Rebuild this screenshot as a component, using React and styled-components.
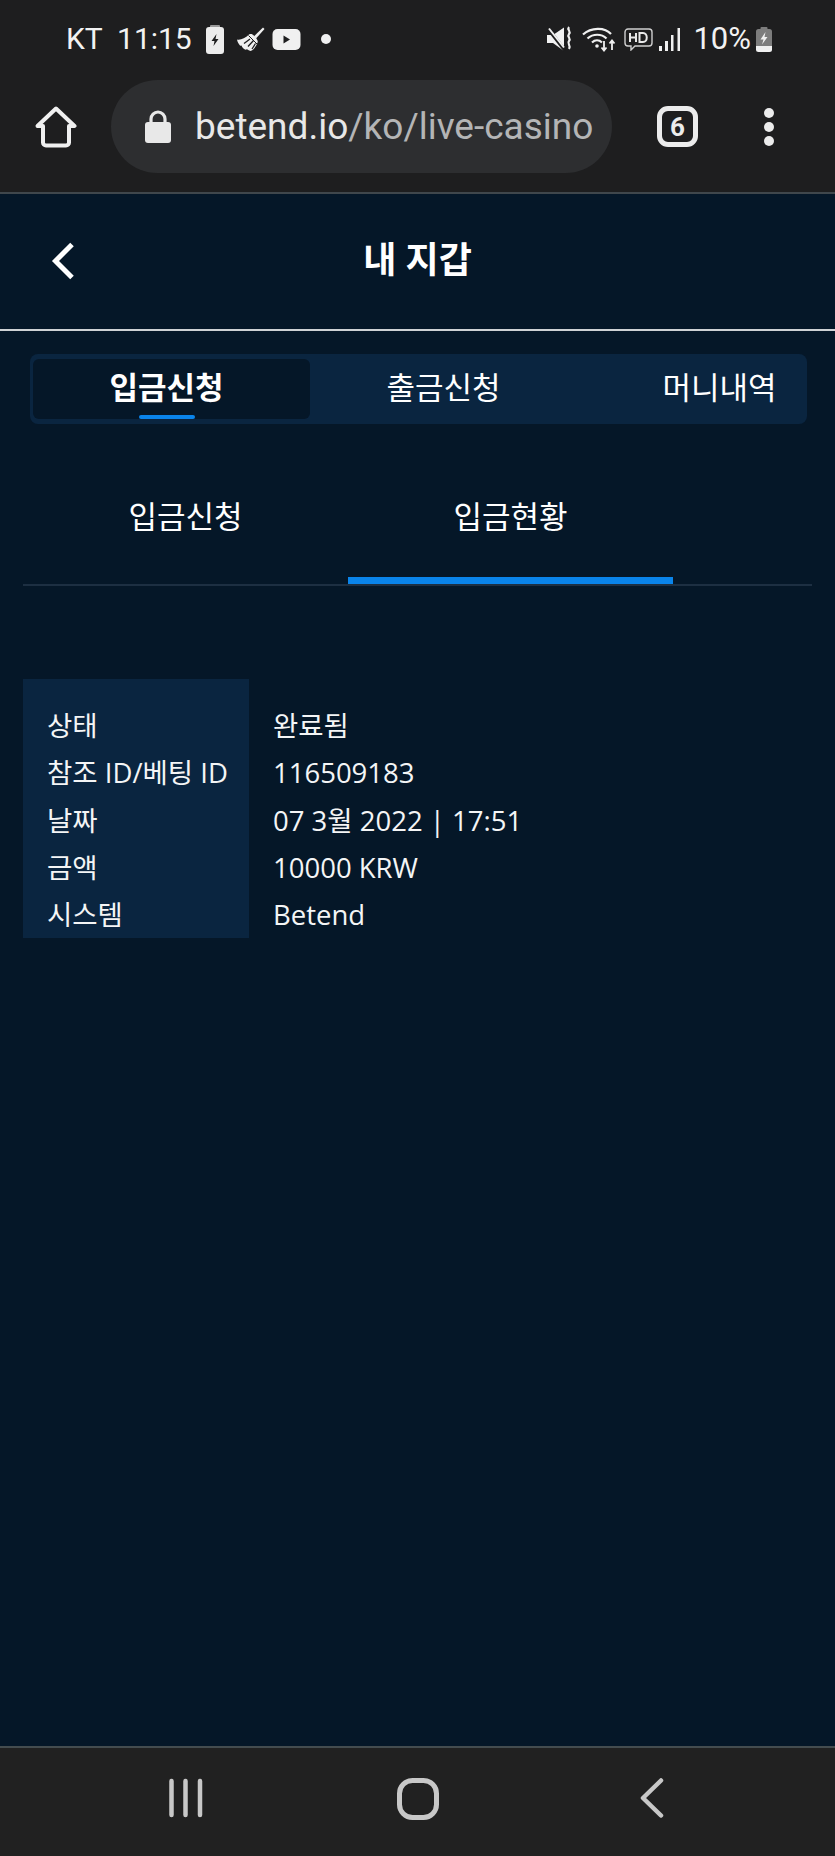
import React from "react";
import styled, { createGlobalStyle } from "styled-components";

const GlobalStyle = createGlobalStyle`
  html, body {
    margin: 0;
    padding: 0;
    background: #051728;
  }
  * {
    box-sizing: border-box;
  }
`;

const Page = styled.div`
  width: 835px;
  height: 1856px;
  display: flex;
  flex-direction: column;
  background: #051728;
  color: #fff;
  font-family: "Open Sans", "Noto Sans CJK KR", sans-serif;
  overflow: hidden;
`;

/* android status bar */
const StatusBar = styled.div`
  height: 80px;
  flex: none;
  display: flex;
  align-items: center;
  justify-content: space-between;
  padding: 0 63px 2px 66px;
  background: #1e1e1f;
  font-family: Roboto, "Liberation Sans", sans-serif;
`;

const StatusGroup = styled.div`
  display: flex;
  align-items: center;
`;

const StatusText = styled.span`
  font-size: ${(p) => p.$size || 31}px;
  line-height: 40px;
  color: #f2f2f2;
  white-space: pre;
  margin-right: ${(p) => p.$mr || 0}px;
`;

const StatusIcon = styled.svg`
  display: block;
  flex: none;
  margin-right: ${(p) => p.$mr || 0}px;
`;

/* chrome toolbar */
const BrowserBar = styled.div`
  height: 114px;
  flex: none;
  display: flex;
  align-items: flex-start;
  padding: 0 0 0 35px;
  background: #1e1e1f;
  border-bottom: 2px solid #40474c;
`;

const ToolbarIcon = styled.svg`
  display: block;
  flex: none;
  margin-top: 26px;
  margin-left: ${(p) => p.$ml || 0}px;
`;

const UrlPill = styled.div`
  width: 501px;
  height: 93px;
  margin-left: 34px;
  display: flex;
  align-items: center;
  padding-left: 34px;
  background: #2d2e30;
  border-radius: 47px;
`;

const UrlText = styled.div`
  margin-left: 24px;
  font-family: Roboto, "Liberation Sans", sans-serif;
  font-size: 37px;
  white-space: nowrap;
  color: #b4b5b6;

  b {
    font-weight: 400;
    color: #e8e8e8;
  }
`;

const TabCounter = styled.div`
  width: 41px;
  height: 41px;
  margin: 26px 0 0 45px;
  display: flex;
  align-items: center;
  justify-content: center;
  border: 5px solid #ececec;
  border-radius: 11px;
  color: #ececec;
  font-family: Roboto, "Liberation Sans", sans-serif;
  font-size: 26px;
  font-weight: 700;
`;

const DotsMenu = styled.div`
  display: flex;
  flex-direction: column;
  gap: 4px;
  margin: 28px 0 0 66px;

  span {
    width: 10px;
    height: 10px;
    border-radius: 50%;
    background: #ececec;
  }
`;

/* wallet page */
const Main = styled.div`
  flex: 1;
  display: flex;
  flex-direction: column;
`;

const Header = styled.div`
  height: 137px;
  flex: none;
  display: flex;
  align-items: center;
  justify-content: center;
  padding-bottom: 3px;
  position: relative;
  border-bottom: 2px solid #cfd2d5;
`;

const BackLink = styled.svg`
  position: absolute;
  left: 51px;
  top: 48px;
`;

const Title = styled.h1`
  margin: 0;
  font-size: 36px;
  line-height: 44px;
  font-weight: 700;
`;

const WalletTabs = styled.div`
  margin: 23px 28px 0 30px;
  height: 70px;
  flex: none;
  display: grid;
  grid-template-columns: 277px 277px 275px;
  padding: 5px 3px;
  background: #0a2540;
  border-radius: 8px;
  overflow: hidden;
`;

const WalletTab = styled.div`
  position: relative;
  display: flex;
  align-items: center;
  justify-content: center;
  padding: 0 10px 7px 0;
  font-size: 31px;
  font-weight: ${(p) => (p.$active ? 700 : 400)};
  background: ${(p) => (p.$active ? "#051728" : "transparent")};
  border-radius: 6px;

  ${(p) =>
    p.$active &&
    `
    &::after {
      content: "";
      position: absolute;
      left: 106px;
      bottom: 0;
      width: 56px;
      height: 4px;
      border-radius: 2px;
      background: #0a84ea;
    }
  `}
`;

const SubTabs = styled.div`
  margin: 56px 23px 0;
  flex: none;
  display: flex;
  border-bottom: 2px solid #1d2f42;
`;

const SubTab = styled.div`
  width: 325px;
  height: 104px;
  display: flex;
  align-items: center;
  justify-content: center;
  padding-bottom: 28px;
  font-size: 31px;
  border-bottom: 7px solid ${(p) => (p.$active ? "#0a84ea" : "transparent")};
`;

const Table = styled.div`
  margin: 93px 23px 0;
  display: flex;
  font-size: 27.5px;
  line-height: 47.3px;
  color: #f4f5f6;
`;

const LabelCol = styled.div`
  width: 226px;
  height: 259px;
  padding: 23px 0 0 24px;
  background: #0a2540;
`;

const ValueCol = styled.div`
  padding: 23px 0 0 24px;
`;

const Row = styled.div`
  white-space: pre;
`;

/* android nav bar */
const NavBar = styled.div`
  height: 110px;
  flex: none;
  display: flex;
  align-items: flex-start;
  background: #212121;
  border-top: 2px solid #444c4f;
  padding: 30px 0 0 166px;
`;

const NavIcon = styled.svg`
  display: block;
  flex: none;
  margin-left: ${(p) => p.$ml || 0}px;
`;

const labels = ["상태", "참조 ID/베팅 ID", "날짜", "금액", "시스템"];
const values = ["완료됨", "116509183", "07 3월 2022 | 17:51", "10000 KRW", "Betend"];

export default function App() {
  return (
    <Page>
      <GlobalStyle />
      <StatusBar>
        <StatusGroup>
          <StatusText $size={30} $mr={13}>KT  11:15</StatusText>
          <StatusIcon width="20" height="29" viewBox="0 0 20 29" $mr={12}>
            <rect x="5" y="0" width="10" height="3" rx="1" fill="#9a9a9a" />
            <rect x="1" y="2" width="18" height="27" rx="3" fill="#ececec" />
            <path d="M11.500 9 6.500 16h3l-1 5 5-7h-3z" fill="#1e1e1f" />
          </StatusIcon>
          <StatusIcon width="28" height="26" viewBox="0 0 28 26" $mr={7}>
            <path d="M26 1.500 27.500 3 19 12.500 16.800 10.500z" fill="#f0f0f0" />
            <path
              d="M12 8.500c2-.8 3.500-.3 5 1.200s2.800 3 3.500 4.800c.4 1 .2 2-.3 2.800C19 20.500 17 23.500 13.500 25c-1.200-.3-2.500-1-3.500-1.800l-1.500.6C6.500 22.800 5 21.200 4.500 19.500l-1.300.2C1.500 18 .4 15.800 0 13.500c3.500.9 8-1.300 12-5z"
              fill="#f0f0f0"
            />
            <path
              d="M16.500 14.500 11 20.500M13 13 7 17.500M18.500 17.500 15 23"
              fill="none"
              stroke="#1e1e1f"
              strokeWidth="1.300"
            />
            <path d="M11.500 9.500 20 18" fill="none" stroke="#1e1e1f" strokeWidth="1" />
          </StatusIcon>
          <StatusIcon width="29" height="21" viewBox="0 0 29 21" $mr={20}>
            <rect x="0.500" y="0" width="28" height="21" rx="5" fill="#f0f0f0" />
            <path d="M11.500 6.500v8l6.500-4z" fill="#1e1e1f" />
          </StatusIcon>
          <StatusIcon width="10" height="10" viewBox="0 0 10 10">
            <circle cx="5" cy="5" r="5" fill="#f0f0f0" />
          </StatusIcon>
        </StatusGroup>
        <StatusGroup>
          <StatusIcon width="26" height="26" viewBox="0 0 26 26" $mr={9}>
            <path d="M0 9h6l11-7.500V25L6 17H0z" fill="#f2f2f2" />
            <path d="M0.500 2 18 24.500" stroke="#1e1e1f" strokeWidth="3.500" />
            <path d="M2 2.500 17 21.500" stroke="#f2f2f2" strokeWidth="2" />
            <path
              d="M22 1c-2.500 3 2.500 4 0 7s2.500 4 0 7 2.500 4 0 8"
              fill="none"
              stroke="#f2f2f2"
              strokeWidth="2.200"
            />
          </StatusIcon>
          <StatusIcon width="34" height="26" viewBox="0 0 34 26" $mr={8}>
            <path
              d="M1 8.500C9 1 23 1 29 8M5.500 12.500c5.500-5 14-5 19 0M10 16.500c3-2.800 7-2.800 10 0"
              fill="none"
              stroke="#f0f0f0"
              strokeWidth="2.200"
            />
            <circle cx="15" cy="20" r="1.800" fill="#f0f0f0" />
            <path
              d="M22 15v9M19.500 21.500 22 24.500l2.500-3M30 24v-9M27.500 17.500 30 14.500l2.500 3"
              fill="none"
              stroke="#f0f0f0"
              strokeWidth="1.800"
            />
          </StatusIcon>
          <StatusIcon width="29" height="23" viewBox="0 0 29 23" $mr={6}>
            <path
              d="M4 1h21a3 3 0 0 1 3 3v11a3 3 0 0 1-3 3H11l-4 4v-4H4a3 3 0 0 1-3-3V4a3 3 0 0 1 3-3z"
              fill="none"
              stroke="#cfcfcf"
              strokeWidth="1.400"
            />
            <path
              d="M6 5v9M12 5v9M6 9.500h6M15.500 5v9h3.500c5 0 5-9 0-9z"
              fill="none"
              stroke="#e8e8e8"
              strokeWidth="2"
            />
          </StatusIcon>
          <StatusIcon width="22" height="24" viewBox="0 0 22 24" $mr={12}>
            <rect x="0" y="19" width="3" height="5" fill="#f0f0f0" />
            <rect x="6" y="14" width="3" height="10" fill="#f0f0f0" />
            <rect x="12" y="8" width="2.500" height="16" fill="#f0f0f0" />
            <rect x="18.500" y="1" width="2.500" height="23" fill="#f0f0f0" />
          </StatusIcon>
          <StatusText $mr={5}>10%</StatusText>
          <StatusIcon width="16" height="25" viewBox="0 0 16 25">
            <rect x="4.500" y="0" width="7" height="3" rx="1" fill="#7d7d7d" />
            <path d="M2.500 2h11A2.500 2.500 0 0 1 16 4.500V19H0V4.500A2.500 2.500 0 0 1 2.500 2z" fill="#7d7d7d" />
            <path d="M0 19h16v3.500a2.500 2.500 0 0 1-2.500 2.500h-11A2.500 2.500 0 0 1 0 22.500z" fill="#f0f0f0" />
            <path d="M9.500 5 4.500 12.500h3l-1.500 5 5.500-7.500h-3z" fill="#f0f0f0" />
          </StatusIcon>
        </StatusGroup>
      </StatusBar>

      <BrowserBar>
        <ToolbarIcon width="42" height="42" viewBox="0 0 42 42">
          <path
            d="M2.500 20 21 2.500 39.500 20h-5.500v16.500a3 3 0 0 1-3 3H11a3 3 0 0 1-3-3V20z"
            fill="none"
            stroke="#f0f0f0"
            strokeWidth="4"
            strokeLinejoin="round"
          />
        </ToolbarIcon>
        <UrlPill>
          <svg width="26" height="33" viewBox="0 0 26 33">
            <path d="M6 14V9a7 7 0 0 1 14 0v5" fill="none" stroke="#e8e8e8" strokeWidth="3.200" />
            <rect x="0" y="12" width="26" height="21" rx="3" fill="#e8e8e8" />
          </svg>
          <UrlText>
            <b>betend.io</b>/ko/live-casino
          </UrlText>
        </UrlPill>
        <TabCounter>6</TabCounter>
        <DotsMenu>
          <span />
          <span />
          <span />
        </DotsMenu>
      </BrowserBar>

      <Main>
        <Header>
          <BackLink width="24" height="38" viewBox="0 0 24 38">
            <path d="M21 2.500 4.500 19 21 35.500" fill="none" stroke="#fff" strokeWidth="5" />
          </BackLink>
          <Title>내 지갑</Title>
        </Header>

        <WalletTabs>
          <WalletTab $active>입금신청</WalletTab>
          <WalletTab>출금신청</WalletTab>
          <WalletTab>머니내역</WalletTab>
        </WalletTabs>

        <SubTabs>
          <SubTab>입금신청</SubTab>
          <SubTab $active>입금현황</SubTab>
        </SubTabs>

        <Table>
          <LabelCol>
            {labels.map((label) => (
              <Row key={label}>{label}</Row>
            ))}
          </LabelCol>
          <ValueCol>
            {values.map((value) => (
              <Row key={value}>{value}</Row>
            ))}
          </ValueCol>
        </Table>
      </Main>

      <NavBar>
        <NavIcon width="38" height="40" viewBox="0 0 38 40">
          <path
            d="M5.500 3v34M19.500 3v34M34 3v34"
            fill="none"
            stroke="#c8c8c8"
            strokeWidth="4.500"
            strokeLinecap="round"
          />
        </NavIcon>
        <NavIcon width="42" height="42" viewBox="0 0 42 42" $ml={193}>
          <rect x="2.500" y="2.500" width="37" height="37" rx="13" fill="none" stroke="#c8c8c8" strokeWidth="5" />
        </NavIcon>
        <NavIcon width="24" height="40" viewBox="0 0 24 40" $ml={201}>
          <path
            d="M21 2.500 3 20 21 37.500"
            fill="none"
            stroke="#c8c8c8"
            strokeWidth="4.500"
            strokeLinecap="round"
            strokeLinejoin="round"
          />
        </NavIcon>
      </NavBar>
    </Page>
  );
}
